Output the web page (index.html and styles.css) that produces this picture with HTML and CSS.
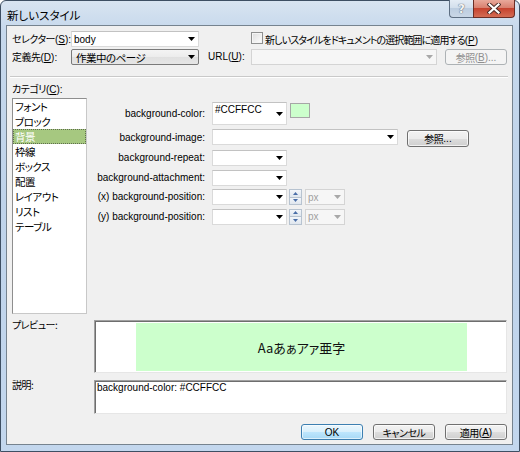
FILE: index.html
```html
<!DOCTYPE html>
<html lang="ja">
<head>
<meta charset="utf-8">
<title>新しいスタイル</title>
<link rel="stylesheet" href="styles.css">
</head>
<body>
<div class="window">
  <div class="titlebar">
    <span class="title">新しいスタイル</span>
    <div class="caption">
      <div class="cap-btn help"><span class="help-glyph">?</span></div>
      <div class="cap-btn close">
        <svg width="14" height="11" viewBox="0 0 14 11"><path d="M2.5 1.5L11.5 9.5M11.5 1.5L2.5 9.5" stroke="#4a2a26" stroke-width="4" stroke-linecap="square"/><path d="M2.5 1.5L11.5 9.5M11.5 1.5L2.5 9.5" stroke="#fff" stroke-width="2.2" stroke-linecap="square"/></svg>
      </div>
    </div>
  </div>
  <div class="client">
    <div class="row">
      <span class="lbl w59"><span class="ja">セレクター</span>(<u>S</u>):</span>
      <div class="combo w128"><span class="val">body</span><svg class="arr" width="7" height="4" viewBox="0 0 7 4"><path d="M0 0H7L3.5 4Z"/></svg></div>
      <span class="check"><span class="box"></span><span><span class="ja tight">新しいスタイルをドキュメントの選択範囲に適用する</span>(<u>P</u>)</span></span>
    </div>
    <div class="row row2">
      <span class="lbl w59"><span class="ja">定義先</span>(<u>D</u>):</span>
      <div class="combo dd w128"><span class="val ja">作業中のページ</span><svg class="arr" width="7" height="4" viewBox="0 0 7 4"><path d="M0 0H7L3.5 4Z"/></svg></div>
      <span class="lbl url">URL(<u>U</u>):</span>
      <div class="combo off w186"><span class="val"></span><svg class="arr" width="7" height="4" viewBox="0 0 7 4"><path d="M0 0H7L3.5 4Z" fill="#a8a8a8"/></svg></div>
      <div class="btn off browse"><span class="ja">参照</span>(<u>B</u>)...</div>
    </div>
    <div class="sep"></div>
    <div class="catlabel"><span class="ja">カテゴリ</span>(<u>C</u>):</div>
    <div class="main">
      <ul class="catlist">
        <li>フォント</li>
        <li>ブロック</li>
        <li class="sel">背景</li>
        <li>枠線</li>
        <li>ボックス</li>
        <li>配置</li>
        <li>レイアウト</li>
        <li>リスト</li>
        <li>テーブル</li>
      </ul>
      <div class="props">
        <span class="plabel">background-color:</span>
        <div class="pfield">
          <div class="combo w75 tall"><span class="val">#CCFFCC</span><svg class="arr" width="7" height="4" viewBox="0 0 7 4"><path d="M0 0H7L3.5 4Z"/></svg></div>
          <div class="swatch"></div>
        </div>
        <span class="plabel">background-image:</span>
        <div class="pfield">
          <div class="combo w186"><span class="val"></span><svg class="arr" width="7" height="4" viewBox="0 0 7 4"><path d="M0 0H7L3.5 4Z"/></svg></div>
          <div class="btn browse2"><span class="ja">参照</span>...</div>
        </div>
        <span class="plabel">background-repeat:</span>
        <div class="pfield">
          <div class="combo w75"><span class="val"></span><svg class="arr" width="7" height="4" viewBox="0 0 7 4"><path d="M0 0H7L3.5 4Z"/></svg></div>
        </div>
        <span class="plabel">background-attachment:</span>
        <div class="pfield">
          <div class="combo w75"><span class="val"></span><svg class="arr" width="7" height="4" viewBox="0 0 7 4"><path d="M0 0H7L3.5 4Z"/></svg></div>
        </div>
        <span class="plabel">(x) background-position:</span>
        <div class="pfield">
          <div class="combo w75"><span class="val"></span><svg class="arr" width="7" height="4" viewBox="0 0 7 4"><path d="M0 0H7L3.5 4Z"/></svg></div>
          <div class="spin"><span class="sp up"><svg width="5" height="3" viewBox="0 0 5 3"><path d="M0 3H5L2.5 0Z"/></svg></span><span class="sp dn"><svg width="5" height="3" viewBox="0 0 5 3"><path d="M0 0H5L2.5 3Z"/></svg></span></div>
          <div class="combo off unit"><span class="val">px</span><svg class="arr" width="7" height="4" viewBox="0 0 7 4"><path d="M0 0H7L3.5 4Z" fill="#a8a8a8"/></svg></div>
        </div>
        <span class="plabel">(y) background-position:</span>
        <div class="pfield">
          <div class="combo w75"><span class="val"></span><svg class="arr" width="7" height="4" viewBox="0 0 7 4"><path d="M0 0H7L3.5 4Z"/></svg></div>
          <div class="spin"><span class="sp up"><svg width="5" height="3" viewBox="0 0 5 3"><path d="M0 3H5L2.5 0Z"/></svg></span><span class="sp dn"><svg width="5" height="3" viewBox="0 0 5 3"><path d="M0 0H5L2.5 3Z"/></svg></span></div>
          <div class="combo off unit"><span class="val">px</span><svg class="arr" width="7" height="4" viewBox="0 0 7 4"><path d="M0 0H7L3.5 4Z" fill="#a8a8a8"/></svg></div>
        </div>
      </div>
    </div>
    <div class="boxrow preview-row">
      <span class="side-lbl ja">プレビュー:</span>
      <div class="sunken preview-box"><div class="sample">Aaあぁアァ亜字</div></div>
    </div>
    <div class="boxrow desc-row">
      <span class="side-lbl ja">説明:</span>
      <div class="sunken desc-box">background-color: #CCFFCC</div>
    </div>
    <div class="buttons">
      <div class="btn def">OK</div>
      <div class="btn"><span class="ja">キャンセル</span></div>
      <div class="btn"><span class="ja">適用</span>(<u>A</u>)</div>
    </div>
  </div>
</div>
</body>
</html>
```

FILE: styles.css
```css
* { box-sizing: border-box; }
html, body { margin: 0; padding: 0; }
body {
  width: 520px;
  height: 452px;
  overflow: hidden;
  background: #ffffff;
  font-family: "Liberation Sans", "Noto Sans CJK JP", sans-serif;
  font-size: 10px;
  color: #000;
}
.ja {
  font-family: "Noto Sans CJK JP", sans-serif;
  font-feature-settings: "palt";
  letter-spacing: -0.5px;
}
.ja.tight { letter-spacing: -0.9px; }
u { text-decoration: underline; text-underline-offset: 1px; }

.window {
  width: 520px;
  height: 452px;
  border: 1px solid #3e4f63;
  border-radius: 6px 6px 0 0;
  background: linear-gradient(#d8e4f1, #c6d8ec 30px, #bfd3ea 200px, #c3d7ee);
  padding: 0 6px 6px 5px;
  display: flex;
  flex-direction: column;
}

.titlebar {
  height: 24px;
  margin: 0 -6px 0 -5px;
  padding-left: 6px;
  display: flex;
  align-items: flex-start;
  justify-content: space-between;
}
.title {
  font-family: "Noto Sans CJK JP", sans-serif;
  font-feature-settings: "palt";
  font-size: 11.5px;
  line-height: 14px;
  margin-top: 7px;
  color: #000;
}
.caption {
  display: flex;
  margin-top: -1px;
  margin-right: 4px;
}
.cap-btn {
  height: 18px;
  border: 1px solid #5d6e82;
  border-top: none;
  display: flex;
  align-items: center;
  justify-content: center;
}
.help {
  width: 24px;
  border-right: none;
  border-radius: 0 0 0 4px;
  background: linear-gradient(#e4ecf5, #d3dfec 45%, #bccde0 50%, #c9d7e6);
}
.help-glyph {
  font-family: "DejaVu Sans", sans-serif;
  font-weight: bold;
  font-size: 12px;
  line-height: 12px;
  color: #f4f4f4;
  text-shadow: 0 0 1px #55606e, 0 0 1px #55606e;
}
.close {
  width: 42px;
  border-radius: 0 0 4px 0;
  border-color: #6b2d25;
  background: linear-gradient(#e9a99b, #d9806f 45%, #c6432f 50%, #d36c54);
}

.client {
  flex: 1;
  border: 1px solid #76838f;
  background: #f0f0f0;
  padding: 5px 5px 0 5px;
  display: flex;
  flex-direction: column;
}

.row { display: flex; align-items: center; height: 16px; }
.row2 { margin-top: 2px; }
.lbl { white-space: nowrap; line-height: 14px; }
.w59 { width: 59px; }
.url { width: 43px; margin-left: 9px; }

.combo {
  height: 16px;
  background: #fff;
  border: 1px solid #dadada;
  border-top-color: #c2c2c2;
  display: flex;
  align-items: center;
  padding-left: 2px;
  flex-shrink: 0;
}
.combo .val { flex: 1; white-space: nowrap; line-height: 13px; }
.combo .arr { margin-right: 3px; flex-shrink: 0; }
.w128 { width: 128px; }
.w186 { width: 186px; }
.w75 { width: 75px; }
.combo.dd {
  background: linear-gradient(#f4f4f4, #ececec 50%, #e0e0e0 51%, #e6e6e6);
  border: 1px solid #7a7a7a;
  border-radius: 2px;
  padding-left: 4px;
}
.combo.dd .val { font-size: 10.5px; }
.combo.off {
  background: #f6f6f6;
  border-color: #d4d4d4;
  color: #9a9a9a;
}
.combo.tall { height: 23px; align-items: flex-start; }
.combo.tall .val { line-height: 14px; }
.combo.tall .arr { margin-top: 9px; }

.check {
  margin-left: 52px;
  display: flex;
  align-items: center;
  white-space: nowrap;
}
.check .box {
  width: 12px;
  height: 12px;
  border: 1px solid #8e8f8f;
  background: linear-gradient(135deg, #dcdcdc, #fefefe);
  box-shadow: inset 0 0 0 1px #f4f4f4;
  margin-right: 2px;
  margin-top: -3px;
}

.btn {
  height: 16px;
  width: 62px;
  border: 1px solid #707070;
  border-radius: 3px;
  background: linear-gradient(#f2f2f2, #ebebeb 50%, #dddddd 51%, #cfcfcf);
  box-shadow: inset 0 0 0 1px rgba(255,255,255,0.7);
  display: flex;
  align-items: center;
  justify-content: center;
  line-height: 13px;
  white-space: nowrap;
}
.btn.off {
  border-color: #adb2b5;
  background: #f4f4f4;
  color: #8f8f8f;
  box-shadow: none;
}
.browse { margin-left: 8px; }
.browse2 { margin-left: 9px; height: 17px; margin-top: 1px; }
.btn.def {
  border-color: #3c7fb1;
  background: linear-gradient(#eaf6fd, #d9f0fc 50%, #bee6fd 51%, #a7d9f5);
  box-shadow: inset 0 0 0 1px rgba(255,255,255,0.6);
}

.sep {
  margin: 11px -1px 0 -2px;
  height: 2px;
  border-top: 1px solid #c9c9c9;
  border-bottom: 1px solid #ffffff;
}
.catlabel { margin-top: 4px; line-height: 14px; height: 14px; }

.main { display: flex; margin-top: 2px; height: 216px; }
.catlist {
  list-style: none;
  margin: 0;
  padding: 0;
  width: 75px;
  height: 216px;
  background: #fff;
  border: 1px solid;
  border-color: #8e8e8e #c8c8c8 #c8c8c8 #8e8e8e;
  flex-shrink: 0;
  font-family: "Noto Sans CJK JP", sans-serif;
  font-feature-settings: "palt";
  font-size: 10.5px;
  letter-spacing: -0.5px;
}
.catlist li {
  height: 15px;
  line-height: 15px;
  padding-left: 2px;
  white-space: nowrap;
}
.catlist li.sel {
  background: #a6c880;
  color: #fff;
  outline: 1px dotted #5e6d4e;
  outline-offset: -1px;
}

.props {
  display: grid;
  grid-template-columns: 118px auto;
  column-gap: 7px;
  row-gap: 3.5px;
  margin-top: 4px;
  align-content: start;
  align-items: center;
}
.plabel { text-align: right; white-space: nowrap; line-height: 14px; }
.pfield { display: flex; align-items: flex-start; }
.swatch {
  width: 20px;
  height: 15px;
  margin-left: 3px;
  margin-top: 1px;
  background: #ccffcc;
  border: 1px solid #a6a6a6;
}
.spin {
  width: 13px;
  height: 16px;
  margin-left: 2px;
  display: flex;
  flex-direction: column;
}
.sp {
  flex: 1;
  border: 1px solid #b7c3d0;
  background: linear-gradient(#f3f6fa, #dfe6ee);
  display: flex;
  align-items: center;
  justify-content: center;
}
.sp + .sp { border-top: none; }
.sp svg path { fill: #4a6ea8; }
.combo.unit { width: 40px; margin-left: 3px; }
.combo.unit .val { color: #a0a0a0; }

.boxrow { display: flex; align-items: flex-start; }
.side-lbl { width: 82px; line-height: 12px; margin-top: -1px; white-space: nowrap; }
.sunken {
  width: 413px;
  background: #fff;
  border: 1px solid;
  border-color: #a0a0a0 #e6e6e6 #e6e6e6 #a0a0a0;
  box-shadow: inset 1px 1px 0 #6e6e6e;
}
.preview-row { margin-top: 6px; }
.preview-box { height: 53px; padding: 2px 0 1px 41px; }
.sample {
  width: 331px;
  height: 48px;
  background: #ccffcc;
  display: flex;
  align-items: center;
  justify-content: center;
  font-family: "Noto Sans CJK JP", sans-serif;
  font-size: 13px;
  font-feature-settings: "palt";
  color: #111;
}
.desc-row { margin-top: 7px; }
.desc-box { height: 34px; padding: 1px 0 0 2px; line-height: 12px; }

.buttons {
  display: flex;
  justify-content: flex-end;
  gap: 10px;
  margin-top: 10px;
}
```
